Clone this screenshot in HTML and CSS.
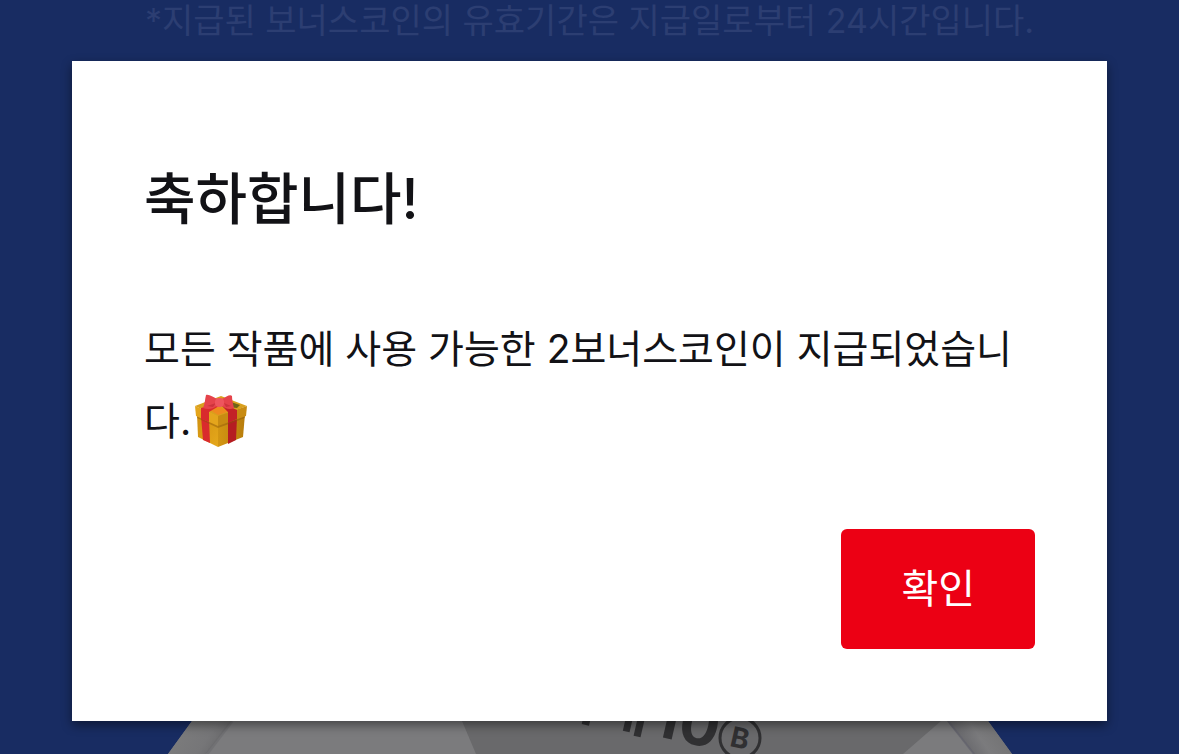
FILE: index.html
```html
<!DOCTYPE html>
<html lang="ko">
<head>
<meta charset="utf-8">
<meta name="viewport" content="width=device-width, initial-scale=1">
<title>보너스코인</title>
<link rel="stylesheet" href="styles.css">
</head>
<body class="page">
<p class="notice">*지급된 보너스코인의 유효기간은 지급일로부터 24시간입니다.</p>
<section class="dialog" role="dialog" aria-labelledby="dialog-title" aria-describedby="dialog-text">
  <h1 class="dialog-title" id="dialog-title">축하합니다!</h1>
  <p class="dialog-text" id="dialog-text">모든 작품에 사용 가능한 2보너스코인이 지급되었습니다.<svg class="gift" viewBox="0 0 54 54" role="img" aria-label="선물">
    <defs>
      <linearGradient id="gl" x1="0" y1="0" x2="1" y2="1"><stop offset="0" stop-color="#d0900f"/><stop offset="1" stop-color="#e5a81c"/></linearGradient>
      <linearGradient id="gr" x1="0" y1="0" x2="1" y2="0"><stop offset="0" stop-color="#d39613"/><stop offset="1" stop-color="#b87d0c"/></linearGradient>
    </defs>
    <path d="M3 20 24 29V53L4 43Z" fill="url(#gl)"/>
    <path d="M24 29 51 20 49 43 24 53Z" fill="url(#gr)"/>
    <path d="M7 22 15 25 16 49 9 46Z" fill="#d92b2d"/>
    <path d="M34 26 43 23 42 46 34 50Z" fill="#b51d22"/>
    <path d="M3 22 24 31 51 22V24L24 34 3 24Z" fill="#8a5508" opacity=".45"/>
    <path d="M1 12 27 2 53 12 24 23Z" fill="#d9a01d"/>
    <path d="M16 16 24 12 36 17 24 21Z" fill="#ee8a1e"/>
    <path d="M1 12 24 22V32L2 22Z" fill="#e4a51c"/>
    <path d="M24 22 53 12 52 22 24 32Z" fill="#c88b12"/>
    <path d="M7 14 21 10 25 12 15 18V28L7 25Z" fill="#d92b2d"/>
    <path d="M28 12 32 11 43 16V25L34 29V18Z" fill="#c32127"/>
    <path d="M37 8 46 11 43 14 34 13Z" fill="#6f6418"/>
    <path d="M23 5C19 3 15 0 12 1 11 5 11 9 9 14 14 16 20 15 24 11Z" fill="#e5434b"/>
    <path d="M28 5C32 3 36 0 38 2 38 6 39 10 40 14 36 16 31 15 27 11Z" fill="#e5434b"/>
    <path d="M13 12 22 9 19 13Z M30 9 37 12 32 13Z" fill="#cd333c"/>
    <rect x="21" y="4" width="9" height="9" rx="4" fill="#ee555e"/>
  </svg></p>
  <button class="confirm" type="button">확인</button>
</section>
<svg class="coupon" viewBox="0 0 1179 33" preserveAspectRatio="xMidYMin slice" aria-hidden="true">
  <defs>
    <linearGradient id="fold-left" gradientUnits="userSpaceOnUse" x1="178" y1="14" x2="214" y2="38"><stop offset="0" stop-color="#7b7b7c"/><stop offset=".6" stop-color="#767678"/><stop offset="1" stop-color="#69696b"/></linearGradient>
    <linearGradient id="fold-right" gradientUnits="userSpaceOnUse" x1="960" y1="18" x2="996" y2="-6"><stop offset="0" stop-color="#69696d"/><stop offset=".4" stop-color="#7b7b7d"/><stop offset="1" stop-color="#717172"/></linearGradient>
  </defs>
  <path d="M192 0H988L1012 33H168Z" fill="#7b7b7d"/>
  <path d="M192 0H232L206 33H168Z" fill="url(#fold-left)"/>
  <path d="M947 0H988L1012 33H974Z" fill="url(#fold-right)"/>
  <path d="M232 0 207 33" stroke="#69696c" stroke-width="3" opacity=".5"/>
  <path d="M948 0 974 33" stroke="#62626d" stroke-width="2" opacity=".7"/>
  <path d="M462 0H941L903 33H476Z" fill="#69696b"/>
  <g transform="translate(648 14) rotate(13)">
    <text class="coupon-label" x="-2" y="-1" text-anchor="end">최대</text>
    <text class="coupon-number" x="2" y="-1">10</text>
  </g>
  <circle cx="740" cy="17" r="20" fill="none" stroke="#303032" stroke-width="3"/>
  <text class="coupon-unit" transform="translate(740 17) rotate(13)" x="0" y="10" text-anchor="middle">B</text>
</svg>
</body>
</html>
```
FILE: styles.css
```css
* {
  box-sizing: border-box;
}

.page {
  margin: 0;
  min-height: 100vh;
  display: flex;
  flex-direction: column;
  overflow: hidden;
  background: #182c62;
  color: #121216;
  font-family: Inter, "Noto Sans CJK KR", sans-serif;
}

.notice {
  margin: 0;
  height: 61px;
  color: #2c3e72;
  font-size: 34px;
  font-weight: 400;
  line-height: 42px;
  text-align: center;
  white-space: nowrap;
}

.dialog {
  position: relative;
  margin: 0 72px;
  padding: 96px 72px 72px;
  display: flex;
  flex-direction: column;
  background: #fff;
  box-shadow: 0 4px 10px rgba(0, 0, 0, 0.45);
}

.dialog-title {
  margin: 0 0 72px;
  font-size: 56px;
  font-weight: 500;
  line-height: 84px;
}

.dialog-text {
  margin: 0 0 72px;
  font-size: 39px;
  font-weight: 400;
  line-height: 72px;
  word-break: break-all;
}

.gift {
  width: 54px;
  height: 54px;
  margin-left: 3px;
  vertical-align: -13px;
}

.confirm {
  align-self: flex-end;
  padding: 30px 60px;
  border: 0;
  border-radius: 6px;
  background: #ec0014;
  color: #fff;
  font: 400 40px/60px Inter, "Noto Sans CJK KR", sans-serif;
}

.coupon {
  display: block;
  width: 100%;
  height: 33px;
}

.coupon text {
  fill: #303032;
  font-weight: 700;
}

.coupon-label {
  font-size: 56px;
}

.coupon-number {
  font-size: 60px;
}

.coupon-unit {
  font-size: 28px;
}
```
